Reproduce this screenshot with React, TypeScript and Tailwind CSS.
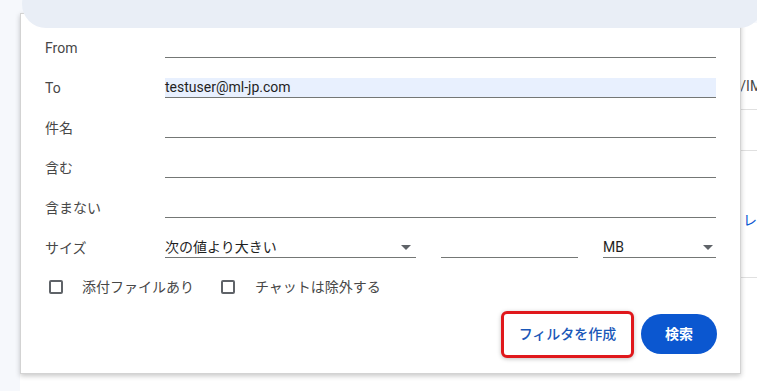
export default function App() {
  const fields = [
    { label: 'From', value: '' },
    { label: 'To', value: 'testuser@ml-jp.com', filled: true },
    { label: '件名', value: '' },
    { label: '含む', value: '' },
    { label: '含まない', value: '' },
  ];

  const Caret = () => (
    <svg width="10" height="5" viewBox="0 0 10 5" className="shrink-0">
      <path d="M0 0h10L5 5z" fill="#5f6368" />
    </svg>
  );

  return (
    <div
      className="relative w-[757px] h-[391px] overflow-hidden bg-[#f6f8fc] flex"
      style={{ fontFamily: 'Roboto, "Noto Sans CJK JP", sans-serif' }}
    >
      {/* left rail */}
      <div className="w-[20px] shrink-0" />

      {/* page behind the popup */}
      <div className="flex-1 flex flex-col">
        <div className="h-[23px] pl-[2px] pr-[22px] relative z-10">
          <div className="h-[48px] -mt-[20px] rounded-full bg-[#e9eef6]" />
        </div>
        <div className="flex-1 bg-white flex flex-col">
          <div className="h-[87px] border-b border-[#e0e0e0] flex items-end pb-[12px] pl-[693px] whitespace-nowrap text-[14px] text-[#444746]">
            POP/IMAP
          </div>
          <div className="h-[41px] border-b border-[#e0e0e0]" />
          <div className="h-[127px] border-b border-[#e0e0e0] flex items-center pt-[12px] pl-[723px] whitespace-nowrap text-[14px] text-[#0b57d0]">
            レクト
          </div>
          <div className="flex-1" />
        </div>
      </div>

      {/* search options popup */}
      <div className="absolute left-[20px] top-[13px] w-[721px] h-[361px] bg-white border border-[#d3d3d3] shadow-[0_2px_5px_rgba(0,0,0,0.22)] flex flex-col pt-[14px] pb-[11px] px-[24px]">
        {fields.map((f) => (
          <div key={f.label} className="h-[40px] flex items-center">
            <div className="w-[120px] shrink-0 text-[14px] text-[#474747]">{f.label}</div>
            <div
              className={`flex-1 h-[20px] border-b border-[#747775] flex items-center text-[14px] text-[#1f1f1f] ${
                f.filled ? 'bg-[#e8f0fe]' : ''
              }`}
            >
              {f.value}
            </div>
          </div>
        ))}

        {/* size */}
        <div className="h-[40px] flex items-center">
          <div className="w-[120px] shrink-0 text-[14px] text-[#474747]">サイズ</div>
          <div className="w-[251px] h-[20px] border-b border-[#747775] flex items-center justify-between pr-[5px] text-[14px] text-[#1f1f1f]">
            <span>次の値より大きい</span>
            <Caret />
          </div>
          <div className="w-[137px] h-[20px] ml-[25px] border-b border-[#747775]" />
          <div className="flex-1 h-[20px] ml-[25px] border-b border-[#747775] flex items-center justify-between pr-[3px] text-[14px] text-[#1f1f1f]">
            <span>MB</span>
            <Caret />
          </div>
        </div>

        {/* checkboxes */}
        <div className="h-[38px] flex items-center text-[14px] text-[#474747]">
          <span className="ml-[4px] w-[14px] h-[14px] border-2 border-[#5f6368] rounded-[2px]" />
          <span className="ml-[19px]">添付ファイルあり</span>
          <span className="ml-[27px] w-[14px] h-[14px] border-2 border-[#5f6368] rounded-[2px]" />
          <span className="ml-[20px]">チャットは除外する</span>
        </div>

        {/* actions */}
        <div className="h-[56px] flex items-center justify-end gap-[7px]">
          <button className="w-[133px] h-[47px] rounded-[6px] border-[3px] border-[#e0181c] shadow-[0_1px_4px_rgba(0,0,0,0.25)] text-[14px] font-medium text-[#1a57b8] bg-white">
            フィルタを作成
          </button>
          <button className="w-[76px] h-[40px] -mr-[1px] rounded-full bg-[#0b57d0] text-white text-[14px] font-bold">
            検索
          </button>
        </div>
      </div>
    </div>
  );
}
